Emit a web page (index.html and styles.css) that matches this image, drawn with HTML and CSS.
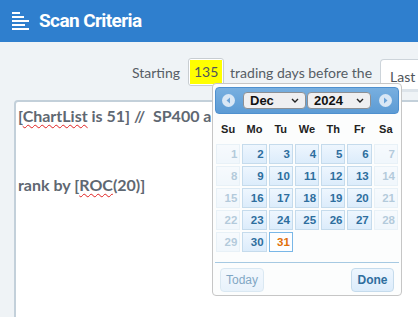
FILE: index.html
```html
<!DOCTYPE html>
<html lang="en">
<head>
    <meta charset="UTF-8">
    <meta name="viewport" content="width=device-width, initial-scale=1.0">
    <title>Scan Criteria</title>
    <link rel="stylesheet" href="styles.css">
</head>
<body>
    <header class="topbar">
        <svg class="menu-icon" width="18" height="18" viewBox="0 0 18 18">
            <rect x="0" y="0" width="8" height="2"/>
            <rect x="0" y="4" width="12" height="2"/>
            <rect x="0" y="8" width="17" height="2"/>
            <rect x="0" y="12" width="13" height="2"/>
            <rect x="0" y="16" width="17" height="2"/>
        </svg>
        <h1>Scan Criteria</h1>
    </header>

    <main class="content">
        <div class="range-row">
            <span>Starting</span>
            <span class="days-input"><span class="days-value">135</span></span>
            <span>trading days before the</span>
            <span class="end-select">Last Index</span>
        </div>

        <div class="criteria-box">
            <div>[<span class="misspelled">ChartList</span> is 51] //&nbsp; SP400 and SP600</div>
            <div>&nbsp;</div>
            <div>&nbsp;</div>
            <div>rank by [<span class="misspelled">ROC</span>(20)]</div>
        </div>
    </main>

    <div class="datepicker">
        <div class="dp-header">
            <span class="dp-nav">
                <svg width="13" height="13" viewBox="0 0 13 13"><circle cx="6.5" cy="6.5" r="6.5" fill="#d9e7f5"/><path d="M8 3.5 L4.5 6.5 L8 9.5 Z" fill="#6da4d8"/></svg>
            </span>
            <div class="dp-selects">
                <span class="dp-select dp-month">Dec<svg width="8" height="5" viewBox="0 0 8 5"><path d="M1 1 L4 4 L7 1" fill="none" stroke="#222" stroke-width="1.4"/></svg></span>
                <span class="dp-select dp-year">2024<svg width="8" height="5" viewBox="0 0 8 5"><path d="M1 1 L4 4 L7 1" fill="none" stroke="#222" stroke-width="1.4"/></svg></span>
            </div>
            <span class="dp-nav">
                <svg width="13" height="13" viewBox="0 0 13 13"><circle cx="6.5" cy="6.5" r="6.5" fill="#d9e7f5"/><path d="M5 3.5 L8.5 6.5 L5 9.5 Z" fill="#6da4d8"/></svg>
            </span>
        </div>

        <div class="dp-weekdays">
            <span>Su</span><span>Mo</span><span>Tu</span><span>We</span><span>Th</span><span>Fr</span><span>Sa</span>
        </div>

        <div class="dp-days" id="dp-days"></div>

        <div class="dp-buttons">
            <button class="dp-btn dp-today">Today</button>
            <button class="dp-btn dp-done">Done</button>
        </div>
    </div>

    <script>
        const daysGrid = document.getElementById('dp-days');
        // December 2024 starts on a Sunday; weekends are not selectable
        for (let day = 1; day <= 31; day++) {
            const cell = document.createElement('span');
            cell.className = 'dp-day';
            const weekday = (day - 1) % 7;
            if (weekday === 0 || weekday === 6) {
                cell.classList.add('disabled');
            }
            if (day === 31) {
                cell.classList.add('today');
            }
            cell.textContent = day;
            daysGrid.appendChild(cell);
        }
    </script>
</body>
</html>
```

FILE: styles.css
```css
body {
    margin: 0;
    font-family: Lato, "Liberation Sans", sans-serif;
    background-color: #eff3f6;
    overflow: hidden;
    position: relative;
    height: 317px;
}
.topbar {
    height: 42px;
    background-color: #2f7fce;
    display: flex;
    align-items: center;
    gap: 9px;
    padding-left: 12px;
}
.menu-icon {
    fill: #fff;
}
.topbar h1 {
    margin: 0;
    color: #fff;
    font-family: Roboto, sans-serif;
    font-size: 19px;
    font-weight: bold;
    letter-spacing: -0.6px;
    line-height: 42px;
}
.content {
    padding: 16px 0 0 14px;
}
.range-row {
    display: flex;
    align-items: center;
    height: 28px;
    padding-left: 118px;
    font-size: 14px;
    color: #565d65;
    white-space: nowrap;
}
.range-row > * {
    flex-shrink: 0;
}
.days-input {
    margin: 0 6px 0 8px;
    width: 32px;
    height: 24px;
    border: 1px solid #c8cdd2;
    border-radius: 3px;
    padding: 1px;
    background-color: #fff;
    display: flex;
}
.days-value {
    flex: 1;
    background-color: #ffff00;
    text-align: center;
    line-height: 24px;
    color: #4f555b;
}
.end-select {
    align-self: flex-start;
    margin: 1px 0 0 8px;
    height: 29px;
    width: 80px;
    border: 1px solid #cdd4da;
    border-bottom: 3px solid #dde4ea;
    border-radius: 4px;
    background-color: #fff;
    padding-left: 9px;
    line-height: 34px;
    color: #4f555b;
}
.criteria-box {
    margin-top: 14px;
    width: 420px;
    height: 240px;
    border: 2px solid #c3d0da;
    border-radius: 4px;
    background-color: #fff;
    padding: 2px 2px;
    font-size: 16px;
    font-weight: bold;
    line-height: 23px;
    color: #5f6872;
    white-space: nowrap;
}
.misspelled {
    text-decoration: underline wavy #e02020;
    text-decoration-thickness: 1px;
    text-decoration-skip-ink: none;
    text-underline-offset: 2px;
}

/* datepicker popup */
.datepicker {
    position: absolute;
    left: 212px;
    top: 83px;
    width: 184px;
    padding: 3px 2px;
    border: 1px solid #c6c6c6;
    border-radius: 4px;
    background-color: #fcfdfd;
    font-family: "Liberation Sans", Arial, sans-serif;
}
.dp-header {
    height: 25px;
    border: 1px solid #4e90cf;
    border-radius: 4px;
    background: linear-gradient(#78afe0, #5c9bd4);
    display: flex;
    align-items: center;
    justify-content: space-between;
    padding: 0 6px;
}
.dp-nav {
    display: flex;
}
.dp-selects {
    display: flex;
    gap: 1px;
}
.dp-select {
    height: 15px;
    border: 1px solid #8c8f94;
    border-radius: 4px;
    background-color: #efeff1;
    display: flex;
    align-items: center;
    justify-content: space-between;
    padding: 0 6px 0 6px;
    font-size: 13px;
    font-weight: bold;
    color: #111;
}
.dp-month {
    width: 49px;
}
.dp-year {
    width: 50px;
}
.dp-weekdays {
    display: grid;
    grid-template-columns: repeat(7, 1fr);
    gap: 2px;
    margin: 0 1px;
    height: 30px;
    align-items: center;
    text-align: center;
    font-size: 11px;
    font-weight: bold;
    color: #222;
}
.dp-days {
    display: grid;
    grid-template-columns: repeat(7, 1fr);
    grid-auto-rows: 20px;
    gap: 2px;
    margin: 0 1px 10px;
}
.dp-day {
    border: 1px solid #c5dbec;
    background: linear-gradient(#eef6fe, #dcecfb);
    text-align: right;
    padding-right: 2px;
    font-size: 11.5px;
    font-weight: bold;
    line-height: 18px;
    color: #2e6e9e;
}
.dp-day.disabled {
    opacity: 0.35;
}
.dp-day.today {
    background: #fdfeff;
    border-color: #79b7e7;
    color: #e17009;
}
.dp-buttons {
    border-top: 1px solid #a6c9e2;
    padding: 5px 5px 0;
    display: flex;
    justify-content: space-between;
}
.dp-btn {
    height: 24px;
    width: 44px;
    border: 1px solid #c5dbec;
    border-radius: 4px;
    background: linear-gradient(#eef6fe, #dcecfb);
    font-family: "Liberation Sans", Arial, sans-serif;
    font-size: 12px;
    color: #2e6e9e;
    padding: 0;
}
.dp-today {
    opacity: 0.6;
}
.dp-done {
    width: 43px;
    font-weight: bold;
}
```
